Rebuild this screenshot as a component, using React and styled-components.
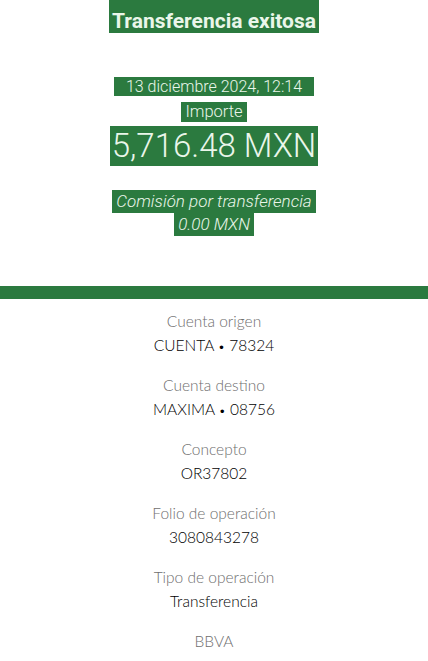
import React from "react";
import styled, { createGlobalStyle } from "styled-components";

const GREEN = "#2b7a3f";
const INK = "#eaf6ea";

const GlobalStyle = createGlobalStyle`
  html, body {
    margin: 0;
    padding: 0;
    background: #ffffff;
  }
  body {
    font-family: Roboto, "Liberation Sans", sans-serif;
  }
`;

const Page = styled.div`
  width: 428px;
  min-height: 661px;
  display: flex;
  flex-direction: column;
  align-items: stretch;
  overflow: hidden;
`;

const Summary = styled.section`
  display: flex;
  flex-direction: column;
  align-items: center;
  height: 286px;
`;

const Title = styled.h1`
  margin: 0 0 44px;
  padding: 9px 3px 0;
  line-height: 24px;
  font-size: 21px;
  font-weight: 700;
  color: ${INK};
  background: ${GREEN};
`;

const Tag = styled.span`
  display: inline-block;
  padding: 0 ${(p) => p.$pad || 4}px;
  margin-top: ${(p) => p.$top || 0}px;
  font-size: ${(p) => p.$size}px;
  line-height: ${(p) => p.$line}px;
  font-weight: 300;
  font-style: ${(p) => (p.$italic ? "italic" : "normal")};
  color: ${INK};
  background: ${GREEN};
  white-space: nowrap;
`;

const Bar = styled.div`
  height: 13px;
  background: ${GREEN};
`;

const Details = styled.dl`
  margin: 0;
  padding: 12px 0 0;
  display: flex;
  flex-direction: column;
  align-items: center;
  gap: 20px;
  font-family: Lato, "Open Sans", sans-serif;
  font-size: 15px;
  line-height: 20px;
`;

const Item = styled.div`
  display: flex;
  flex-direction: column;
  align-items: center;
  gap: 4px;
`;

const Label = styled.dt`
  font-weight: 300;
  font-size: 15.5px;
  color: #6e6e6e;
`;

const Value = styled.dd`
  margin: 0;
  font-weight: 300;
  font-size: 15.5px;
  color: #000000;
`;

const Dot = styled.span`
  font-size: 12px;
  line-height: 0;
`;

const rows = [
  ["Cuenta origen", "CUENTA", "78324"],
  ["Cuenta destino", "MAXIMA", "08756"],
  ["Concepto", "OR37802"],
  ["Folio de operación", "3080843278"],
  ["Tipo de operación", "Transferencia"],
];

export default function App() {
  return (
    <Page>
      <GlobalStyle />
      <Summary>
        <Title>Transferencia exitosa</Title>
        <Tag $size={16} $line={19} $pad={12}>13 diciembre 2024, 12:14</Tag>
        <Tag $size={16.5} $line={20} $top={6}>Importe</Tag>
        <Tag $size={33} $line={40} $top={4} $pad={2}>5,716.48 MXN</Tag>
        <Tag $size={17} $line={23} $top={24} $italic>Comisión por transferencia</Tag>
        <Tag $size={17} $line={23} $italic>0.00 MXN</Tag>
      </Summary>
      <Bar />
      <Details>
        {rows.map(([label, value, suffix]) => (
          <Item key={label}>
            <Label>{label}</Label>
            <Value>
              {value}
              {suffix && (
                <>
                  {" "}<Dot>•</Dot> {suffix}
                </>
              )}
            </Value>
          </Item>
        ))}
        <Item>
          <Label>BBVA</Label>
        </Item>
      </Details>
    </Page>
  );
}
